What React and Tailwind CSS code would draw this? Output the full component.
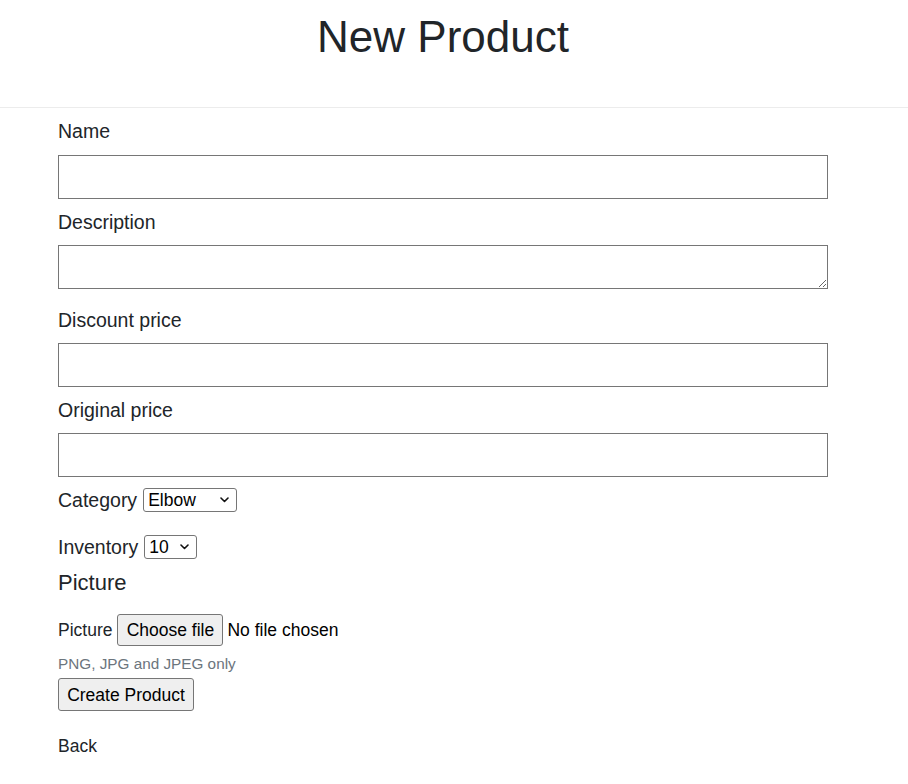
import React from "react";

function Chevron() {
  return (
    <svg width="9" height="6" viewBox="0 0 9 6" className="pointer-events-none absolute right-[8px] top-1/2 -translate-y-1/2">
      <path d="M1 1 L4.5 4.5 L8 1" fill="none" stroke="#111" strokeWidth="1.6" strokeLinecap="round" strokeLinejoin="round" />
    </svg>
  );
}

function Select({ value, options, width }) {
  return (
    <div className="relative inline-block">
      <select
        defaultValue={value}
        className={`appearance-none h-[24px] ${width} border border-[#767676] rounded-[3px] bg-white pl-[4px] pr-[20px] text-[17.5px] leading-[22px] text-black outline-none`}
      >
        {options.map((o) => (
          <option key={o}>{o}</option>
        ))}
      </select>
      <Chevron />
    </div>
  );
}

export default function App() {
  const label = "block h-[46px] text-[19.5px] leading-[46px]";
  const input = "block w-full h-[44px] border border-[#767676] bg-white outline-none";
  return (
    <div className="min-h-[784px] bg-white text-[#212529] font-['Liberation_Sans',Arial,sans-serif]">
      <header className="h-[108px] border-b border-[#ececec]">
        <div className="ml-[58px] w-[770px] pt-[10px]">
          <h1 className="text-center text-[44px] leading-[54px] font-normal">New Product</h1>
        </div>
      </header>
      <form className="ml-[58px] w-[770px]" onSubmit={(e) => e.preventDefault()}>
        <label className={label}>Name</label>
        <input type="text" className={`${input} mt-px`} />
        <label className={label}>Description</label>
        <textarea className={`${input} resize mb-[8px]`} />
        <label className={label}>Discount price</label>
        <input type="text" className={input} />
        <label className={label}>Original price</label>
        <input type="text" className={input} />

        <div className="mt-[11px] h-[24px] flex items-center gap-[6px]">
          <span className="text-[19.5px] leading-[24px]">Category</span>
          <Select value="Elbow" options={["Elbow", "Knee", "Shoulder"]} width="w-[94px]" />
        </div>
        <div className="mt-[23px] h-[24px] flex items-center gap-[6px]">
          <span className="text-[19.5px] leading-[24px]">Inventory</span>
          <Select value="10" options={["10", "20", "30"]} width="w-[53px]" />
        </div>

        <h2 className="mt-[11px] text-[22px] leading-[26px] font-normal">Picture</h2>

        <div className="mt-[18px] h-[32px] flex items-center">
          <span className="text-[17.5px] leading-[22px]">Picture</span>
          <button
            type="button"
            className="ml-[5px] h-[32px] w-[106px] border border-[#767676] rounded-[3px] bg-[#efefef] text-[17.5px] leading-[22px] text-black"
          >
            Choose file
          </button>
          <span className="ml-[4px] text-[17.5px] leading-[22px] text-black">No file chosen</span>
        </div>

        <p className="mt-[9px] text-[15.3px] leading-[18px] text-[#6c757d]">PNG, JPG and JPEG only</p>

        <button
          type="submit"
          className="mt-[5px] block h-[33px] w-[136px] border border-[#767676] rounded-[3px] bg-[#efefef] text-[17.5px] leading-[22px] text-black"
        >
          Create Product
        </button>

        <a href="#" className="mt-[24px] block w-max text-[17.5px] leading-[22px] text-[#212529]">
          Back
        </a>
      </form>
    </div>
  );
}
